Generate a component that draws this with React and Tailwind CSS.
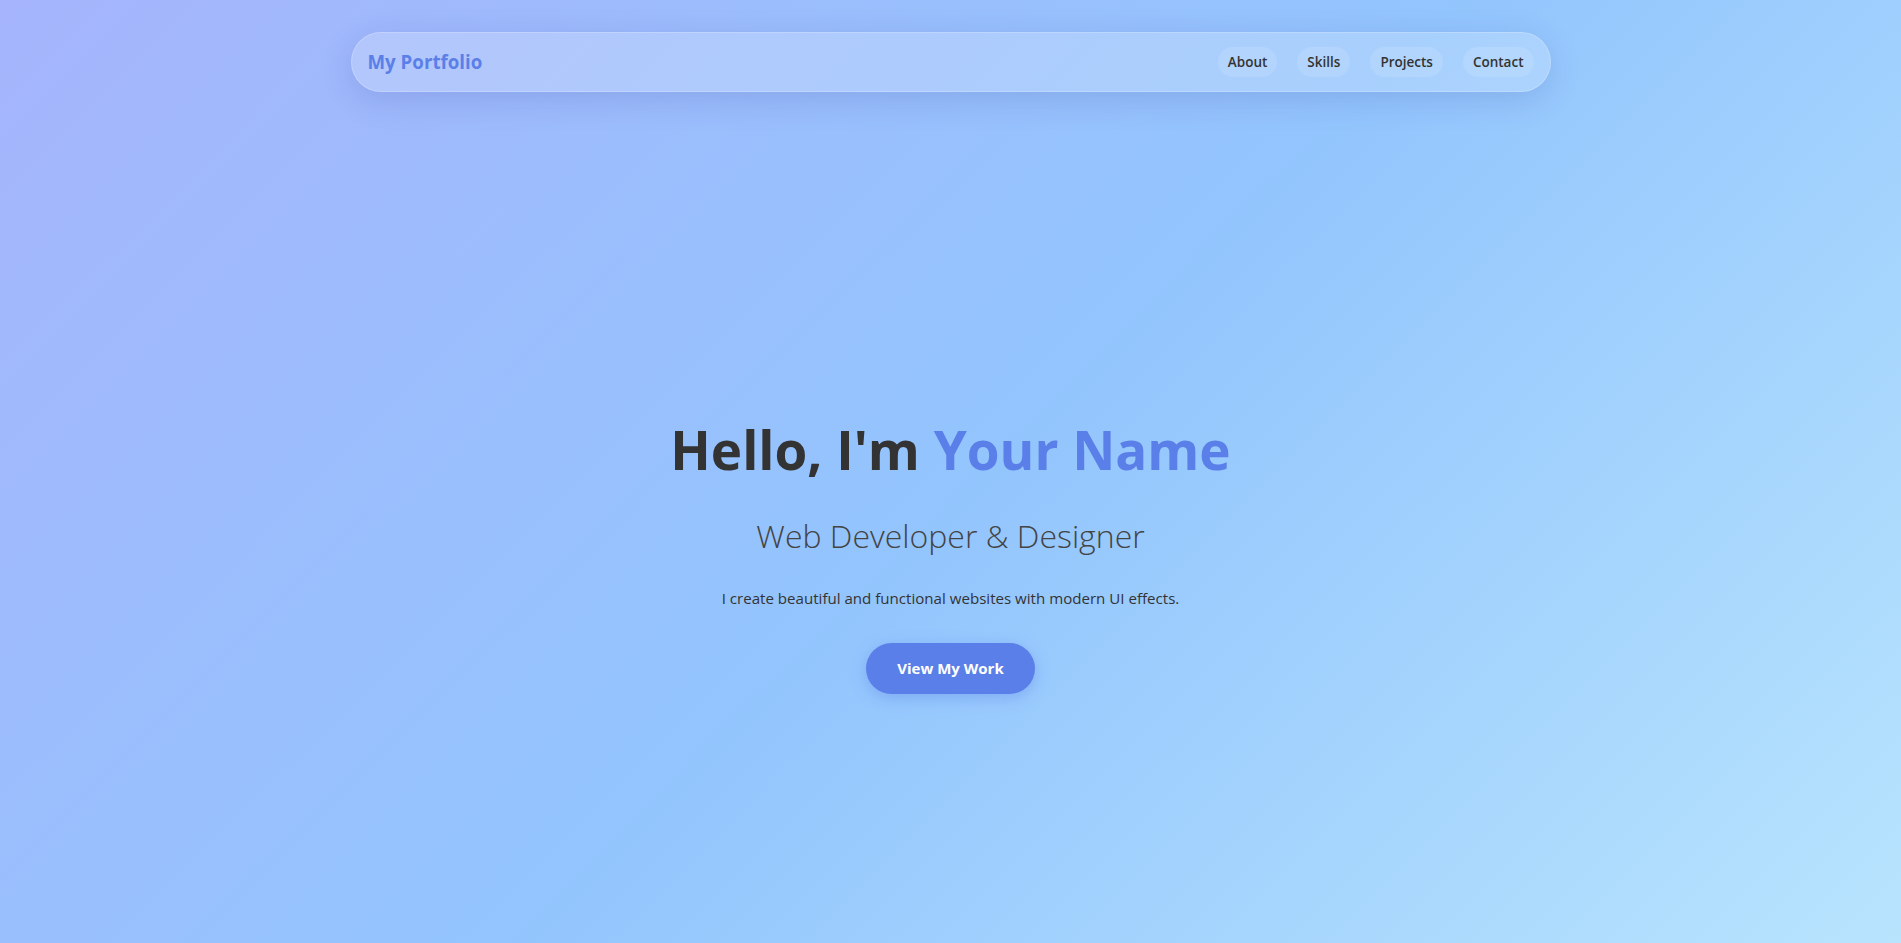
export default function App() {
  const links = ['About', 'Skills', 'Projects', 'Contact']

  return (
    <div className="min-h-screen bg-[linear-gradient(135deg,#a5b4fc_0%,#93c5fd_50%,#bae6fd_100%)] font-['Open_Sans',sans-serif] text-[#333]">
      {/* Nav */}
      <div className="pt-8">
        <nav className="mx-auto flex h-[60px] w-[1200px] items-center justify-between rounded-full border border-white/20 bg-white/20 px-4 shadow-[0_8px_32px_rgba(31,38,135,0.15)]">
          <a href="#" className="text-[18.7px] font-bold text-[#5b7fe8]">My Portfolio</a>
          <ul className="flex items-center gap-5">
            {links.map((link) => (
              <li key={link}>
                <a href="#" className="block h-[30px] rounded-full bg-white/10 px-[10px] text-[13.5px] leading-[30px] font-semibold text-[#333]">
                  {link}
                </a>
              </li>
            ))}
          </ul>
        </nav>
      </div>

      {/* Hero */}
      <section className="flex h-screen flex-col items-center justify-center pb-4 text-center">
        <h1 className="text-[53px] leading-[64px] font-bold text-[#333]">
          Hello, I'm <span className="text-[#5b7fe8]">Your Name</span>
        </h1>
        <h2 className="mt-[34px] text-[32px] leading-[40px] font-light text-[#444]">
          Web Developer &amp; Designer
        </h2>
        <p className="mt-[30px] text-[15.1px] leading-[24px] text-[#333]">
          I create beautiful and functional websites with modern UI effects.
        </p>
        <a href="#" className="mt-[33px] flex h-[51px] items-center rounded-full bg-[#5b7fe8] px-[31px] text-[15px] font-bold text-white shadow-[0_4px_15px_rgba(91,127,232,0.4)]">
          View My Work
        </a>
      </section>
    </div>
  )
}
